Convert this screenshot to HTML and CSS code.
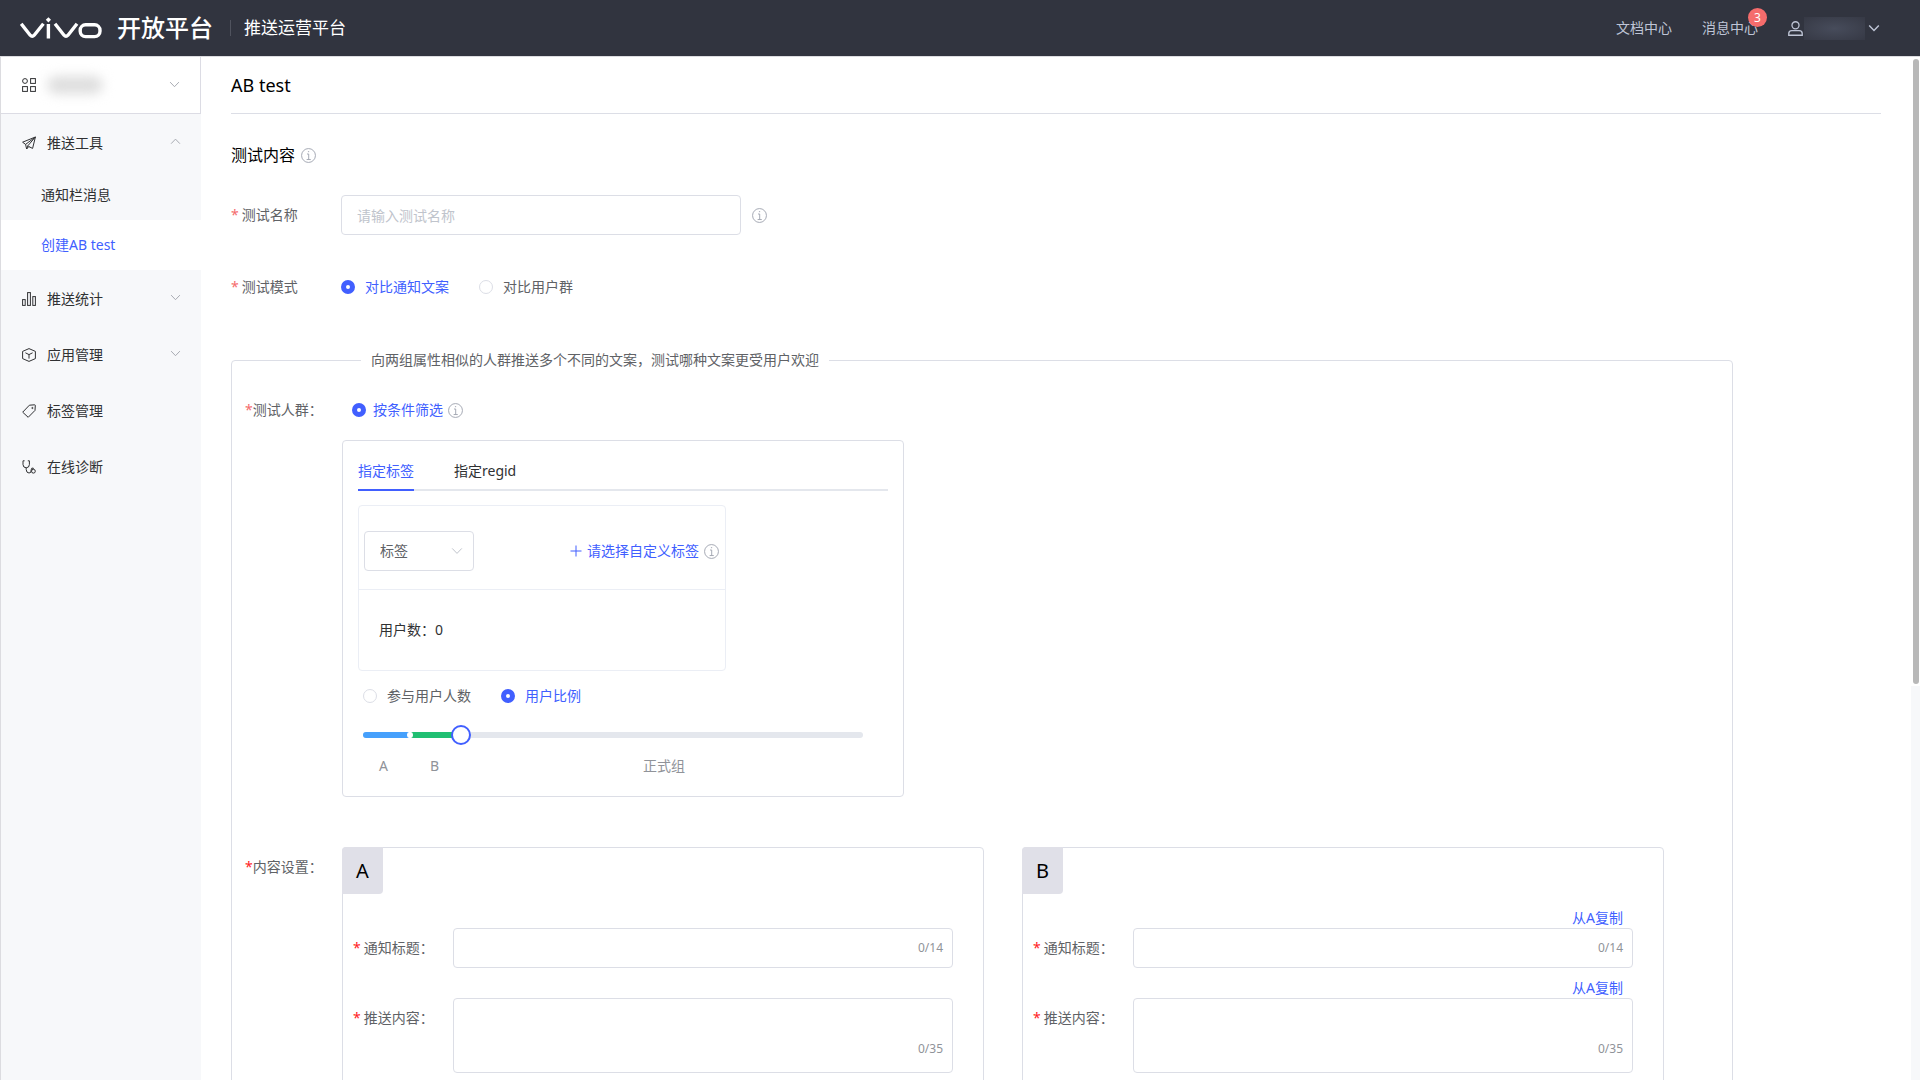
FILE: index.html
```html
<!DOCTYPE html>
<html lang="zh-CN">
<head>
<meta charset="utf-8">
<title>AB test - 推送运营平台</title>
<link rel="stylesheet" href="styles.css">
</head>
<body>
<svg class="sprite" aria-hidden="true">
  <symbol id="info" viewBox="0 0 16 16"><circle cx="8" cy="8" r="7.4"/><path d="M6.4 6.4H8.2V12.2M6 12.3H10.4M7.4 3.9H8.7"/></symbol>
  <symbol id="down" viewBox="0 0 12 12"><path d="M1.2 3.4 6 8.4 10.8 3.4"/></symbol>
  <symbol id="up" viewBox="0 0 12 12"><path d="M1.2 8.4 6 3.4 10.8 8.4"/></symbol>
</svg>

<header class="topbar">
  <svg class="logo" viewBox="0 0 82 22" role="img" aria-label="vivo">
    <path d="M1.2 6.8 10.2 18.2Q12.2 20.4 14.2 18.2L23.4 6.8M28.4 7V21.4M35 6.8 44 18.2Q46 20.4 48 18.2L57 6.8"/>
    <rect x="60.2" y="7.8" width="19.8" height="11.8" rx="5.4"/>
    <path class="logo-dot" d="M28.4.2 31 2.8 28.4 5.4 25.8 2.8Z"/>
  </svg>
  <span class="brand">开放平台</span>
  <span class="product">推送运营平台</span>
  <nav class="topnav">
    <a href="#docs">文档中心</a>
    <a href="#messages" class="messages">消息中心<span class="badge">3</span></a>
    <button type="button" class="account" aria-label="账号">
      <svg class="icon-user" viewBox="0 0 14 14"><circle cx="7" cy="4" r="3.3"/><path d="M.7 13.3V11.8Q.7 9 3.5 9H10.5Q13.3 9 13.3 11.8V13.3Z"/></svg>
      <span class="account-name"></span>
      <svg class="icon-caret"><use href="#down"/></svg>
    </button>
  </nav>
</header>

<div class="layout">
  <aside class="sidebar">
    <button type="button" class="app-picker" aria-label="选择应用">
      <svg class="icon" viewBox="0 0 14 14"><circle cx="3" cy="3" r="2.4"/><rect x="8.6" y=".6" width="4.8" height="4.8"/><rect x=".6" y="8.6" width="4.8" height="4.8"/><rect x="8.6" y="8.6" width="4.8" height="4.8"/></svg>
      <span class="app-name"></span>
      <svg class="caret"><use href="#down"/></svg>
    </button>
    <nav class="menu">
      <a href="#tools" class="menu-item">
        <svg class="icon" viewBox="0 0 14 14"><path d="M13.4 1 .6 6.2 3.6 8.4 4.6 13 6.8 10.6 10.6 12.4ZM13.4 1 3.6 8.4M13.4 1 6 9.6 4.6 13M6 9.6 6.8 10.6"/></svg>
        推送工具<svg class="caret"><use href="#up"/></svg>
      </a>
      <a href="#notice" class="menu-sub">通知栏消息</a>
      <a href="#abtest" class="menu-sub active">创建AB test</a>
      <a href="#stats" class="menu-item">
        <svg class="icon" viewBox="0 0 14 14"><rect x=".6" y="7.6" width="2.6" height="5.8"/><rect x="5.6" y=".6" width="2.8" height="12.8"/><rect x="10.8" y="4.6" width="2.6" height="8.8"/></svg>
        推送统计<svg class="caret"><use href="#down"/></svg>
      </a>
      <a href="#apps" class="menu-item">
        <svg class="icon" viewBox="0 0 14 14"><path d="M7 .6 13.4 3.4V10.6L7 13.4.6 10.6V3.4ZM3.4 4.8 7 6.6 10.6 4.8M7 6.6V10.6"/></svg>
        应用管理<svg class="caret"><use href="#down"/></svg>
      </a>
      <a href="#tags" class="menu-item">
        <svg class="icon" viewBox="0 0 14 14"><path d="M.7 8.2 7.4 1.2 12.6.8Q13.4.8 13.3 1.6L13 6.4 6.2 13.3Z"/><circle cx="10.4" cy="4" r=".6"/></svg>
        标签管理
      </a>
      <a href="#diagnose" class="menu-item">
        <svg class="icon" viewBox="0 0 14 14"><path d="M2.6.8H1V4.6Q1.2 7.8 4.2 7.8T7.4 4.6V.8H5.8M4.2 7.8V9.6Q4.4 13 7 13T9 10.4Q9.2 7.4 11.2 8V9.2"/><circle cx="11.4" cy="11.2" r="1.9"/></svg>
        在线诊断
      </a>
    </nav>
  </aside>

  <main class="content">
    <h1 class="page-title">AB test</h1>
    <h2 class="section-title">测试内容<svg class="info"><use href="#info"/></svg></h2>

    <form>
      <div class="row row-name">
        <label class="row-label" for="test-name"><i class="star">*</i>测试名称</label>
        <input id="test-name" class="text-input name-input" type="text" placeholder="请输入测试名称">
        <svg class="info"><use href="#info"/></svg>
      </div>
      <div class="row row-mode">
        <span class="row-label"><i class="star">*</i>测试模式</span>
        <label class="radio"><input type="radio" name="mode" checked><span>对比通知文案</span></label>
        <label class="radio"><input type="radio" name="mode"><span>对比用户群</span></label>
      </div>

      <fieldset class="panel">
        <legend>向两组属性相似的人群推送多个不同的文案，测试哪种文案更受用户欢迎</legend>

        <div class="panel-row">
          <span class="panel-label"><i class="star">*</i>测试人群：</span>
          <label class="radio radio-tight"><input type="radio" name="crowd" checked><span>按条件筛选</span><svg class="info"><use href="#info"/></svg></label>
        </div>

        <div class="card audience">
          <div class="tabs" role="tablist">
            <button type="button" class="tab active" role="tab" aria-selected="true">指定标签</button>
            <button type="button" class="tab" role="tab" aria-selected="false">指定regid</button>
          </div>
          <div class="tag-box">
            <div class="tag-head">
              <div class="select-wrap">
                <select class="select" aria-label="筛选类型"><option>标签</option></select>
                <svg class="select-caret"><use href="#down"/></svg>
              </div>
              <button type="button" class="link-btn add-tag">
                <svg class="plus" viewBox="0 0 12 12"><path d="M6 .5V11.5M.5 6H11.5"/></svg>请选择自定义标签
              </button>
              <svg class="info"><use href="#info"/></svg>
            </div>
            <p class="tag-count">用户数：0</p>
          </div>
          <div class="split-mode">
            <label class="radio"><input type="radio" name="split"><span>参与用户人数</span></label>
            <label class="radio"><input type="radio" name="split" checked><span>用户比例</span></label>
          </div>
          <div class="slider">
            <div class="track"><span class="seg-a"></span><span class="seg-dot"></span><span class="seg-b"></span></div>
            <input class="range" type="range" min="0" max="500" value="98" aria-label="用户比例">
          </div>
          <div class="slider-labels"><span>A</span><span>B</span><span class="rest">正式组</span></div>
        </div>

        <div class="panel-row groups">
          <span class="panel-label"><i class="star">*</i>内容设置：</span>
          <section class="card group">
            <h3 class="group-tag">A</h3>
            <div class="field">
              <label class="field-label" for="title-a"><i class="star">*</i>通知标题：</label>
              <div class="field-box"><input id="title-a" class="text-input" type="text"><span class="counter">0/14</span></div>
            </div>
            <div class="field">
              <label class="field-label" for="body-a"><i class="star">*</i>推送内容：</label>
              <div class="field-box"><textarea id="body-a" class="text-input area"></textarea><span class="counter">0/35</span></div>
            </div>
          </section>
          <section class="card group">
            <h3 class="group-tag">B</h3>
            <div class="field">
              <label class="field-label" for="title-b"><i class="star">*</i>通知标题：</label>
              <div class="field-box"><button type="button" class="link-btn copy">从A复制</button><input id="title-b" class="text-input" type="text"><span class="counter">0/14</span></div>
            </div>
            <div class="field">
              <label class="field-label" for="body-b"><i class="star">*</i>推送内容：</label>
              <div class="field-box"><button type="button" class="link-btn copy">从A复制</button><textarea id="body-b" class="text-input area"></textarea><span class="counter">0/35</span></div>
            </div>
          </section>
        </div>
      </fieldset>
    </form>
  </main>
  <div class="scrollbar" aria-hidden="true"><div class="scroll-gutter"><div class="scroll-thumb"></div></div></div>
</div>
</body>
</html>
```
FILE: styles.css
```css
:root {
  --blue: #415fff;
  --line: #dcdee6;
  --text: #303133;
  --muted: #606266;
}

* { box-sizing: border-box; }

body {
  margin: 0;
  height: 100vh;
  display: flex;
  flex-direction: column;
  overflow: hidden;
  background: #fff;
  color: var(--text);
  font: 14px/20px "Noto Sans", "Noto Sans CJK SC", sans-serif;
}

h1, h2, h3, p { margin: 0; font-weight: 400; }
a { color: inherit; text-decoration: none; }
button, input, select, textarea { font: inherit; color: inherit; margin: 0; }
button { padding: 0; border: 0; background: none; cursor: pointer; }
svg { flex: none; fill: none; stroke: currentColor; }
.sprite { position: absolute; width: 0; height: 0; }

/* Top bar */
.topbar {
  flex: none;
  display: flex;
  align-items: center;
  height: 57px;
  padding: 0 40px 0 20px;
  border-bottom: 1px solid #dcdce0;
  background: #31343f;
  color: #fff;
}
.logo { width: 82px; height: 22px; stroke-width: 3.4; }
.logo-dot { fill: #fff; stroke: none; }
.brand { margin-left: 15px; font-size: 24px; line-height: 32px; font-weight: 500; }
.product {
  margin-left: 17px;
  padding-left: 13px;
  border-left: 1px solid #50535e;
  font-size: 17px;
  line-height: 16px;
}
.topnav { display: flex; align-items: center; gap: 30px; margin-left: auto; color: #bfc5d6; }
.messages { position: relative; }
.badge {
  position: absolute;
  top: -10px;
  right: -9px;
  width: 19px;
  height: 19px;
  border-radius: 10px;
  background: #f56c6c;
  color: #fff;
  font-size: 12px;
  line-height: 19px;
  text-align: center;
}
.account { display: flex; align-items: center; }
.icon-user { width: 15px; height: 15px; stroke-width: 1.2; }
.account-name { width: 61px; height: 23px; margin: 0 3px 0 1px; background: radial-gradient(#474c5b, #363945); }
.icon-caret { width: 12px; height: 12px; stroke-width: 1.4; }

/* Sidebar */
.layout { flex: 1; display: flex; min-height: 0; }
.sidebar { flex: none; width: 201px; border-left: 1px solid #dcdce0; background: #f7f8fa; }
.app-picker {
  display: flex;
  align-items: center;
  width: 100%;
  height: 57px;
  padding: 0 20px 0 21px;
  border-right: 1px solid #dcdce4;
  border-bottom: 1px solid #dcdce4;
  background: #fff;
}
.app-name { width: 56px; height: 18px; margin-left: 11px; border-radius: 9px; background: #dedede; filter: blur(6px); }
.icon { width: 14px; height: 14px; stroke-width: 1; }
.caret { width: 11px; height: 11px; margin: 0 0 2px auto; color: #a0a3ab; }
.menu-item { display: flex; align-items: center; height: 56px; padding: 2px 20px 0 21px; }
.menu-item .icon { margin-right: 11px; }
.menu-item .caret { margin-bottom: 4px; }
.menu-sub { display: flex; align-items: center; height: 50px; padding-left: 40px; }
.menu-sub.active { background: #fff; color: var(--blue); }

/* Content */
.content { flex: 1; min-width: 0; padding: 0 30px; overflow-y: auto; scrollbar-width: none; }
.scrollbar { flex: none; width: 9px; background: #f7f8fa; }
.scroll-gutter { height: 61.5%; padding: 2px 1px 2px 2px; background: #fff; }
.scroll-thumb { height: 100%; border-radius: 3px; background: #b8b8b8; }
.page-title { height: 57px; border-bottom: 1px solid var(--line); color: #000; font-size: 18px; line-height: 56px; }
.section-title { display: flex; align-items: center; gap: 6px; margin-top: 31px; color: #000; font-size: 16px; line-height: 20px; }
.info { width: 15px; height: 15px; color: #a0a4b0; }
.star { color: #f56c6c; font-style: normal; }

.text-input {
  display: block;
  width: 100%;
  height: 40px;
  padding: 0 15px;
  border: 1px solid var(--line);
  border-radius: 4px;
  background: #fff;
  outline: 0;
}
.text-input::placeholder { color: #c0c4cc; }
.row { display: flex; align-items: center; height: 40px; color: var(--muted); }
.row-name { margin-top: 30px; }
.row-mode { margin-top: 32px; }
.row-label { width: 110px; }
.row-label .star { margin-right: 3px; }
.name-input { width: 400px; margin-right: 11px; }

.radio { display: inline-flex; align-items: center; gap: 10px; margin-right: 30px; color: var(--muted); }
.radio input {
  appearance: none;
  width: 14px;
  height: 14px;
  border: 1px solid var(--line);
  border-radius: 50%;
  background: #fff;
}
.radio input:checked { border: 5px solid var(--blue); }
.radio input:checked + span { color: var(--blue); }
.radio-tight { gap: 7px; }
.radio-tight .info { margin-left: -2px; }

/* Test settings panel */
.panel {
  min-width: 0;
  margin: 43px 148px 0 0;
  padding: 30px 13px 590px;
  border: 1px solid var(--line);
  border-radius: 4px;
}
.panel legend { margin-left: 116px; padding: 0 10px; color: var(--muted); }
.panel-row { display: flex; }
.panel-label { flex: none; width: 97px; color: var(--muted); }
.panel-row .radio { margin-left: 10px; }
.card { border: 1px solid var(--line); border-radius: 4px; }

.audience { width: 562px; margin: 20px 0 0 97px; padding: 15px 15px 20px; }
.tabs { display: flex; gap: 40px; border-bottom: 2px solid #e4e7ed; }
.tab { height: 35px; margin-bottom: -2px; padding-bottom: 3px; border-bottom: 2px solid transparent; }
.tab.active { border-color: var(--blue); color: var(--blue); }
.tag-box { width: 368px; margin-top: 14px; border: 1px solid #ebeef5; border-radius: 4px; }
.tag-head { display: flex; align-items: center; height: 84px; padding: 7px 6px 0 5px; border-bottom: 1px solid #ebeef5; }
.select-wrap { position: relative; width: 110px; }
.select {
  appearance: none;
  display: block;
  width: 100%;
  height: 40px;
  padding: 0 15px;
  border: 1px solid var(--line);
  border-radius: 4px;
  background: #fff;
  color: var(--muted);
}
.select-caret { position: absolute; top: 14px; right: 11px; width: 12px; height: 12px; color: #c0c4cc; }
.link-btn { color: var(--blue); }
.add-tag { display: flex; align-items: center; gap: 5px; margin: 0 5px 0 auto; }
.plus { width: 12px; height: 12px; }
.tag-count { padding: 30px 20px; }
.split-mode { display: flex; margin: 15px 0 0 5px; }
.slider { position: relative; width: 500px; margin: 26px 0 0 5px; }
.track { display: flex; height: 6px; overflow: hidden; border-radius: 3px; background: #e4e7ed; }
.seg-a { width: 44px; background: #46a0fc; }
.seg-dot { width: 6px; border-radius: 3px; background: #fff; box-shadow: -3px 0 #46a0fc, 3px 0 #20bf72; }
.seg-b { width: 48px; background: #20bf72; }
.range {
  appearance: none;
  position: absolute;
  top: -7px;
  left: -10px;
  width: 520px;
  height: 20px;
  background: none;
}
.range::-webkit-slider-thumb {
  appearance: none;
  width: 20px;
  height: 20px;
  border: 2px solid var(--blue);
  border-radius: 50%;
  background: #fff;
}
.slider-labels { display: flex; gap: 42px; margin: 18px 0 0 21px; color: #909399; }
.rest { margin-left: 162px; }

.groups { margin-top: 50px; }
.groups .panel-label { margin-top: 10px; }
.groups .star { color: #f22; }
.group { flex: 0 1 642px; min-height: 300px; padding: 0 30px 30px 10px; }
.group + .group { margin-left: 38px; }
.group-tag {
  width: max-content;
  height: 47px;
  margin: -1px 0 34px -11px;
  padding: 0 14px;
  border-radius: 4px 0 4px 0;
  background: #e0e0e8;
  color: #000;
  font-size: 20px;
  line-height: 47px;
}
.field { display: flex; margin-bottom: 30px; }
.field-label { flex: none; width: 100px; color: var(--muted); line-height: 40px; }
.field-label .star { margin-right: 3px; }
.field-box { position: relative; flex: 1; }
.area { height: 75px; padding: 8px 15px; resize: none; }
.counter { position: absolute; right: 10px; bottom: 10px; color: #909399; font-size: 12px; }
.area + .counter { bottom: 14px; }
.copy { position: absolute; right: 10px; bottom: 100%; }
```
